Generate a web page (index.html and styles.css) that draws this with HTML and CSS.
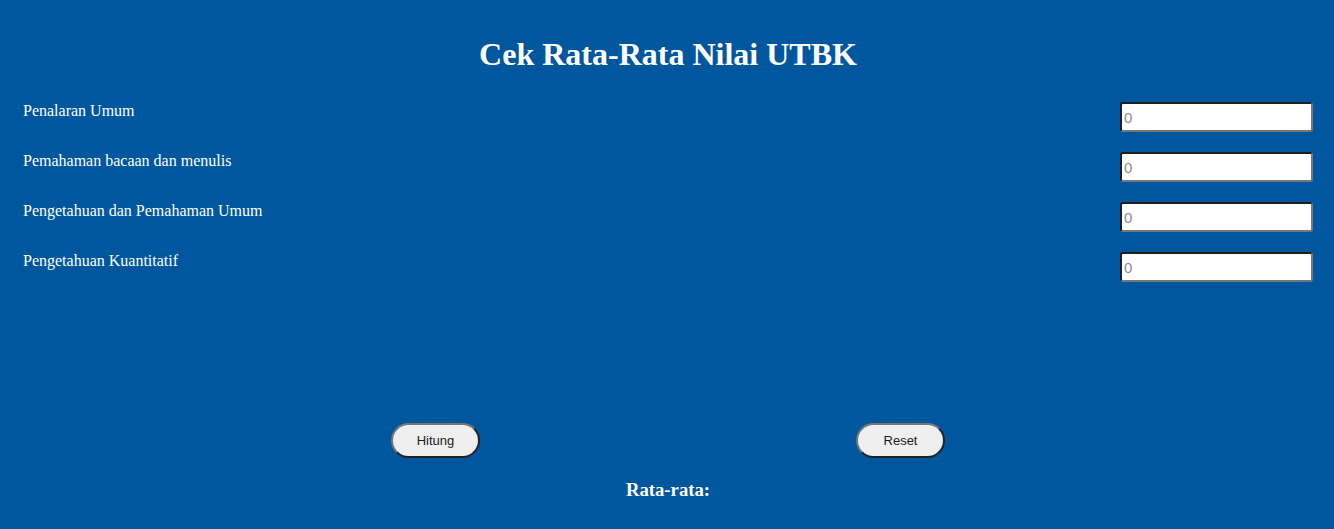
FILE: index.html
```html
<!DOCTYPE html>
<html lang="id">
<head>
<meta charset="utf-8">
<title>Cek Rata-Rata Nilai UTBK</title>
<link rel="stylesheet" href="styles.css">
</head>
<body>
<main class="page">
  <h1 class="title">Cek Rata-Rata Nilai UTBK</h1>
  <form class="form">
    <div class="row">
      <label class="label" for="pu">Penalaran Umum</label>
      <input class="field" id="pu" type="number" placeholder="0">
    </div>
    <div class="row">
      <label class="label" for="pbm">Pemahaman bacaan dan menulis</label>
      <input class="field" id="pbm" type="number" placeholder="0">
    </div>
    <div class="row">
      <label class="label" for="ppu">Pengetahuan dan Pemahaman Umum</label>
      <input class="field" id="ppu" type="number" placeholder="0">
    </div>
    <div class="row">
      <label class="label" for="pk">Pengetahuan Kuantitatif</label>
      <input class="field" id="pk" type="number" placeholder="0">
    </div>
    <div class="actions">
      <div class="cell"><button type="button" class="btn">Hitung</button></div>
      <div class="cell"><button type="reset" class="btn">Reset</button></div>
    </div>
  </form>
  <h3 class="result">Rata-rata:</h3>
</main>
</body>
</html>
```
FILE: styles.css
```css
html, body {
  margin: 0;
  padding: 0;
}
body {
  background: #00579e;
  color: #ffffff;
  font-family: "Liberation Serif", "Times New Roman", serif;
}
.page {
  padding: 36px 21px 0 23px;
}
.title {
  margin: 0;
  text-align: center;
  font-size: 32px;
  line-height: 37px;
  font-weight: bold;
}
.form {
  margin-top: 29px;
  display: flex;
  flex-direction: column;
}
.row {
  display: flex;
  justify-content: space-between;
  align-items: flex-start;
  height: 50px;
}
.label {
  font-size: 16px;
  line-height: 18px;
}
.field {
  box-sizing: border-box;
  width: 193px;
  height: 30px;
  margin: 0;
  padding: 1px 2px;
  border-style: solid;
  border-width: 2px;
  border-color: #1f1f1f #777777 #777777 #1f1f1f;
  border-radius: 3px;
  background: #ffffff;
  font-family: "Liberation Sans", Arial, sans-serif;
  font-size: 15px;
  color: #222;
  -moz-appearance: textfield;
}
.field::-webkit-outer-spin-button,
.field::-webkit-inner-spin-button {
  -webkit-appearance: none;
  margin: 0;
}
.field::placeholder {
  color: #8a8a8a;
}
.actions {
  margin: 121px auto 0;
  width: 930px;
  display: grid;
  grid-template-columns: 1fr 1fr;
}
.cell {
  display: flex;
  justify-content: center;
}
.btn {
  box-sizing: border-box;
  width: 89px;
  height: 35px;
  border-style: solid;
  border-width: 2px;
  border-color: #777777 #222222 #222222 #777777;
  border-radius: 18px;
  background: #efefef;
  color: #1a1a1a;
  font-family: "Liberation Sans", Arial, sans-serif;
  font-size: 13px;
  padding: 0;
}
.result {
  margin: 21px 0 0;
  text-align: center;
  font-size: 18.7px;
  line-height: 22px;
  font-weight: bold;
}
```
